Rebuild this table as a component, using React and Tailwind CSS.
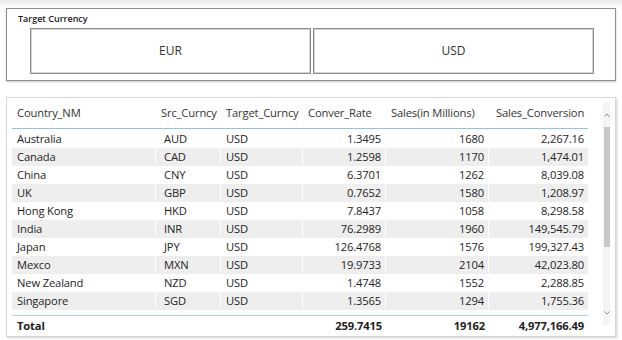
import React from 'react'

const rows = [
  ['Australia', 'AUD', 'USD', '1.3495', '1680', '2,267.16'],
  ['Canada', 'CAD', 'USD', '1.2598', '1170', '1,474.01'],
  ['China', 'CNY', 'USD', '6.3701', '1262', '8,039.08'],
  ['UK', 'GBP', 'USD', '0.7652', '1580', '1,208.97'],
  ['Hong Kong', 'HKD', 'USD', '7.8437', '1058', '8,298.58'],
  ['India', 'INR', 'USD', '76.2989', '1960', '149,545.79'],
  ['Japan', 'JPY', 'USD', '126.4768', '1576', '199,327.43'],
  ['Mexco', 'MXN', 'USD', '19.9733', '2104', '42,023.80'],
  ['New Zealand', 'NZD', 'USD', '1.4748', '1552', '2,288.85'],
  ['Singapore', 'SGD', 'USD', '1.3565', '1294', '1,755.36'],
]

const cols = 'grid grid-cols-[144px_65px_82px_83px_103px_99px]'

function SlicerButton({ label }) {
  return (
    <div className="flex-1 h-[46px] flex items-center justify-center border border-[#8c8c8c] shadow-[inset_0_0_0_1px_#d4d4d4] text-[12px] text-[#333]">
      {label}
    </div>
  )
}

export default function App() {
  return (
    <div className="w-[622px] h-[340px] bg-white font-['Segoe_UI','Open_Sans',sans-serif] text-[#252423] overflow-hidden">
      <div className="h-[8px] bg-gradient-to-b from-[#e9e9e9] to-white" />

      {/* slicer */}
      <div className="ml-[6px] w-[610px] h-[73px] border border-[#8e8e8e] shadow-[0_1px_2px_#c8c8c8] pl-[23px] pr-[21px]">
        <div className="h-[19px] pt-[4px] -ml-[12px] text-[9px] font-semibold text-[#222] leading-[12px]">
          Target Currency
        </div>
        <div className="flex gap-[2px]">
          <SlicerButton label="EUR" />
          <SlicerButton label="USD" />
        </div>
      </div>

      {/* table */}
      <div className="mt-[16px] ml-[6px] w-[610px] h-[240px] border border-[#d6d6d6] shadow-[1px_1px_2px_#d0d0d0] pl-[5px] flex text-[11.2px] tracking-[-0.15px]">
        <div className="w-[576px]">
          <div className={`${cols} h-[31px] items-center border-b border-[#8fc3ec] text-[#333]`}>
            <div className="pl-[5px]">Country_NM</div>
            <div className="pl-[5px]">Src_Curncy</div>
            <div className="pl-[5px]">Target_Curncy</div>
            <div className="pl-[5px]">Conver_Rate</div>
            <div className="pl-[5px]">Sales(in Millions)</div>
            <div className="pl-[7px]">Sales_Conversion</div>
          </div>
          <div className="pt-[1px]">
            {rows.map((r, i) => (
              <div
                key={r[0]}
                className={`${cols} h-[18px] leading-[18px] ${i % 2 === 1 ? 'bg-[#eeeeee]' : 'bg-white'}`}
              >
                <div className="pl-[5px] border-r border-white">{r[0]}</div>
                <div className="pl-[8px] border-r border-white">{r[1]}</div>
                <div className="pl-[5px] border-r border-white">{r[2]}</div>
                <div className="pr-[4px] text-right border-r border-white">{r[3]}</div>
                <div className="pr-[4px] text-right border-r border-white">{r[4]}</div>
                <div className="pr-[4px] text-right">{r[5]}</div>
              </div>
            ))}
          </div>
          <div className={`${cols} mt-[5px] h-[19px] leading-[19px] border-t border-[#a9d1f1] font-bold text-[#222]`}>
            <div className="pl-[5px]">Total</div>
            <div />
            <div />
            <div className="pr-[4px] text-right">259.7415</div>
            <div className="pr-[4px] text-right">19162</div>
            <div className="pr-[4px] text-right">4,977,166.49</div>
          </div>
        </div>

        {/* scrollbar */}
        <div className="ml-[15px] mt-[4px] w-[7px] h-[223px] bg-[#f4f4f4] flex flex-col items-center">
          <div className="h-[25px] flex items-center justify-center">
            <svg width="6" height="4" viewBox="0 0 6 4">
              <path d="M0.5 3.5 L3 1 L5.5 3.5" fill="none" stroke="#8a8a8a" strokeWidth="1" />
            </svg>
          </div>
          <div className="w-[6px] h-[120px] bg-[#c8c8c8]" />
          <div className="flex-1" />
          <div className="h-[24px] flex items-center justify-center">
            <svg width="6" height="4" viewBox="0 0 6 4">
              <path d="M0.5 0.5 L3 3 L5.5 0.5" fill="none" stroke="#8a8a8a" strokeWidth="1" />
            </svg>
          </div>
        </div>
      </div>
    </div>
  )
}
